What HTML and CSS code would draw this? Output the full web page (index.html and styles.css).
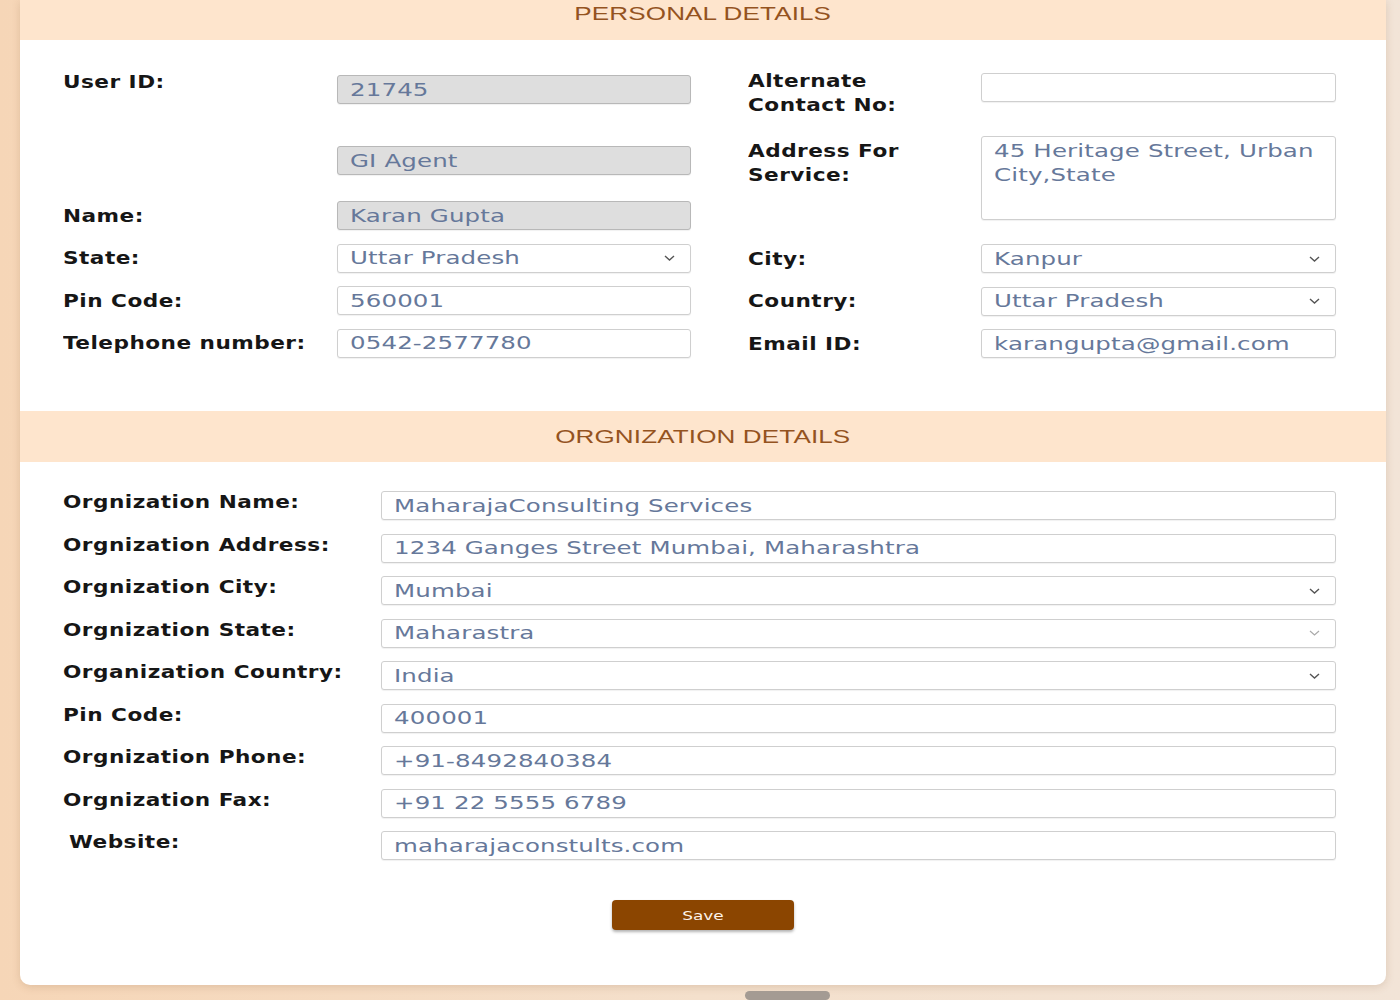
FILE: index.html
```html
<!DOCTYPE html>
<html lang="en">
<head>
<meta charset="utf-8">
<title>Profile Details</title>
<link rel="stylesheet" href="styles.css">
</head>
<body>
<div class="page">
  <div class="card">
    <div class="sec-head sec-head-first"><span class="sx">PERSONAL DETAILS</span></div>
    <div class="personal">
      <div class="col col-left">
        <div class="row row-top row-userid">
          <div class="lbl"><span class="sx">User ID:</span></div>
          <div class="field disabled"><span class="sx">21745</span></div>
        </div>
        <div class="row row-agent">
          <div class="lbl"></div>
          <div class="field disabled"><span class="sx">GI Agent</span></div>
        </div>
        <div class="row row-name">
          <div class="lbl"><span class="sx">Name:</span></div>
          <div class="field disabled"><span class="sx">Karan Gupta</span></div>
        </div>
        <div class="row row-std">
          <div class="lbl"><span class="sx">State:</span></div>
          <div class="field select"><span class="sx">Uttar Pradesh</span><svg class="chev" width="11" height="6" viewBox="0 0 11 6"><path d="M1 1 L5.5 5 L10 1" fill="none" stroke="#555" stroke-width="1.4"/></svg></div>
        </div>
        <div class="row row-std">
          <div class="lbl"><span class="sx">Pin Code:</span></div>
          <div class="field"><span class="sx">560001</span></div>
        </div>
        <div class="row row-std">
          <div class="lbl"><span class="sx">Telephone number:</span></div>
          <div class="field"><span class="sx">0542-2577780</span></div>
        </div>
      </div>
      <div class="col col-right">
        <div class="row row-top row-alt">
          <div class="lbl"><span class="sx">Alternate<br>Contact No:</span></div>
          <div class="field"></div>
        </div>
        <div class="row row-top row-address">
          <div class="lbl"><span class="sx">Address For<br>Service:</span></div>
          <div class="field area"><span class="sx">45 Heritage Street, Urban<br>City,State</span></div>
        </div>
        <div class="row row-city">
          <div class="lbl"><span class="sx">City:</span></div>
          <div class="field select"><span class="sx">Kanpur</span><svg class="chev" width="11" height="6" viewBox="0 0 11 6"><path d="M1 1 L5.5 5 L10 1" fill="none" stroke="#555" stroke-width="1.4"/></svg></div>
        </div>
        <div class="row row-std">
          <div class="lbl"><span class="sx">Country:</span></div>
          <div class="field select"><span class="sx">Uttar Pradesh</span><svg class="chev" width="11" height="6" viewBox="0 0 11 6"><path d="M1 1 L5.5 5 L10 1" fill="none" stroke="#555" stroke-width="1.4"/></svg></div>
        </div>
        <div class="row row-std">
          <div class="lbl"><span class="sx">Email ID:</span></div>
          <div class="field"><span class="sx">karangupta@gmail.com</span></div>
        </div>
      </div>
    </div>

    <div class="sec-head sec-head-second"><span class="sx">ORGNIZATION DETAILS</span></div>
    <div class="org">
      <div class="org-row">
        <div class="lbl"><span class="sx">Orgnization Name:</span></div>
        <div class="field"><span class="sx">MaharajaConsulting Services</span></div>
      </div>
      <div class="org-row">
        <div class="lbl"><span class="sx">Orgnization Address:</span></div>
        <div class="field"><span class="sx">1234 Ganges Street Mumbai, Maharashtra</span></div>
      </div>
      <div class="org-row">
        <div class="lbl"><span class="sx">Orgnization City:</span></div>
        <div class="field select"><span class="sx">Mumbai</span><svg class="chev" width="11" height="6" viewBox="0 0 11 6"><path d="M1 1 L5.5 5 L10 1" fill="none" stroke="#555" stroke-width="1.4"/></svg></div>
      </div>
      <div class="org-row">
        <div class="lbl"><span class="sx">Orgnization State:</span></div>
        <div class="field select"><span class="sx">Maharastra</span><svg class="chev" width="11" height="6" viewBox="0 0 11 6"><path d="M1 1 L5.5 5 L10 1" fill="none" stroke="#aaa" stroke-width="1.2"/></svg></div>
      </div>
      <div class="org-row">
        <div class="lbl"><span class="sx">Organization Country:</span></div>
        <div class="field select"><span class="sx">India</span><svg class="chev" width="11" height="6" viewBox="0 0 11 6"><path d="M1 1 L5.5 5 L10 1" fill="none" stroke="#555" stroke-width="1.4"/></svg></div>
      </div>
      <div class="org-row">
        <div class="lbl"><span class="sx">Pin Code:</span></div>
        <div class="field"><span class="sx">400001</span></div>
      </div>
      <div class="org-row">
        <div class="lbl"><span class="sx">Orgnization Phone:</span></div>
        <div class="field"><span class="sx">+91-8492840384</span></div>
      </div>
      <div class="org-row">
        <div class="lbl"><span class="sx">Orgnization Fax:</span></div>
        <div class="field"><span class="sx">+91 22 5555 6789</span></div>
      </div>
      <div class="org-row">
        <div class="lbl lbl-indent"><span class="sx">Website:</span></div>
        <div class="field"><span class="sx">maharajaconstults.com</span></div>
      </div>
    </div>
    <div class="actions">
      <button class="save" type="button"><span class="sx">Save</span></button>
    </div>
  </div>
  <div class="scroll-thumb"></div>
</div>
</body>
</html>
```

FILE: styles.css
```css
* {
  box-sizing: border-box;
}

html, body {
  margin: 0;
  padding: 0;
}

body {
  font-family: "DejaVu Sans", "Liberation Sans", sans-serif;
  color: #1a1a1a;
}

.page {
  position: relative;
  height: 1000px;
  overflow: hidden;
  background: linear-gradient(to right, #f6d6b7 0%, #f4e0cc 50%, #f2e4d7 100%);
  padding: 0 14px 0 20px;
}

.card {
  background: #ffffff;
  border-radius: 0 0 10px 10px;
  box-shadow: 0 2px 8px rgba(120, 80, 40, 0.18);
  overflow: hidden;
}

/* horizontally widened text (the design's wide geometric face) */
.sx {
  display: inline-block;
  white-space: nowrap;
  transform-origin: 0 50%;
}

.sec-head {
  background: #fee5cd;
  text-align: center;
  font-family: "Liberation Sans", Arial, sans-serif;
  font-size: 19px;
  line-height: 24px;
  color: #94531f;
}

.sec-head .sx {
  transform: scaleX(1.37);
  transform-origin: 50% 50%;
  letter-spacing: 0.1px;
}

.sec-head-first {
  height: 40px;
  padding-top: 2px;
}

.sec-head-second {
  height: 51px;
  padding-top: 14px;
}

.personal {
  display: flex;
  gap: 57px;
  padding: 0 50px 53px 43px;
}

.col {
  display: flex;
  flex-direction: column;
}

.col-left {
  width: 628px;
}

.col-right {
  width: 588px;
}

.row {
  display: flex;
  align-items: center;
}

.row-top {
  align-items: flex-start;
}

.lbl {
  font-family: "DejaVu Sans", sans-serif;
  font-weight: bold;
  font-size: 18px;
  line-height: 24px;
  color: #161616;
}

.lbl .sx {
  transform: scaleX(1.2);
  letter-spacing: 0.4px;
}

.col-left .lbl {
  flex: 0 0 274px;
}

.col-right .lbl {
  flex: 0 0 233px;
}

.field {
  flex: 1 1 auto;
  height: 29px;
  border: 1px solid #cfcfcf;
  border-radius: 3px;
  background: #ffffff;
  box-shadow: 0 1px 1px rgba(0, 0, 0, 0.06);
  padding: 0 15px 0 12px;
  display: flex;
  align-items: center;
  font-family: "DejaVu Sans", sans-serif;
  font-size: 18px;
  line-height: 24px;
  color: #66789a;
  white-space: nowrap;
  overflow: hidden;
}

.field .sx {
  transform: scaleX(1.36);
  letter-spacing: 0.1px;
}

.field.disabled {
  background: #dedede;
  border-color: #b8b8b8;
}

.field.select {
  justify-content: space-between;
}

.chev {
  flex: 0 0 auto;
  display: block;
}

.field.area {
  height: 84px;
  display: block;
  padding-top: 2px;
  white-space: normal;
}

/* left column vertical rhythm */
.row-userid {
  margin-top: 30px;
}

.row-userid .field {
  margin-top: 5px;
}

.row-agent {
  margin-top: 42px;
}

.row-name {
  margin-top: 26px;
}

.row-std {
  margin-top: 13.5px;
}

/* right column vertical rhythm */
.row-alt {
  margin-top: 29px;
}

.row-alt .field {
  margin-top: 4px;
}

.row-address {
  margin-top: 19px;
}

.row-address .lbl {
  margin-top: 3px;
}

.row-city {
  margin-top: 24px;
}

.org {
  display: flex;
  flex-direction: column;
  gap: 13.5px;
  padding: 29px 50px 0 43px;
}

.org-row {
  display: flex;
  align-items: flex-start;
}

.org-row .lbl {
  flex: 0 0 318px;
  margin-top: -1px;
}

.lbl-indent {
  padding-left: 6px;
}

.actions {
  display: flex;
  justify-content: center;
  padding: 40px 0 55px;
}

.save {
  width: 182px;
  height: 30px;
  border: none;
  border-radius: 4px;
  background: #8b4500;
  color: #fdf3ea;
  font-family: "DejaVu Sans", sans-serif;
  font-size: 13px;
  box-shadow: 0 2px 3px rgba(0, 0, 0, 0.3);
  cursor: pointer;
}

.save .sx {
  transform: scaleX(1.3);
  transform-origin: 50% 50%;
}

.scroll-thumb {
  position: absolute;
  left: 745px;
  top: 991px;
  width: 85px;
  height: 9px;
  border-radius: 5px;
  background: #a49b93;
}
```
